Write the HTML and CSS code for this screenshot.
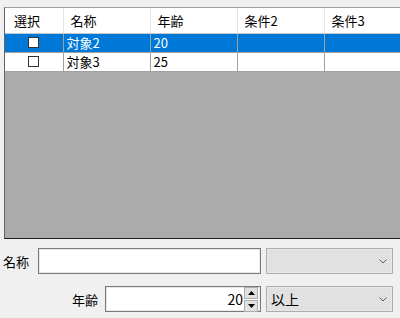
FILE: index.html
```html
<!DOCTYPE html>
<html lang="ja">
<head>
    <meta charset="UTF-8">
    <title>対象一覧</title>
    <link rel="stylesheet" href="styles.css">
</head>
<body>
    <!-- Grid -->
    <div class="grid-box">
        <table class="grid">
            <thead>
                <tr>
                    <th class="col-check">選択</th>
                    <th class="col-wide">名称</th>
                    <th class="col-wide">年齢</th>
                    <th class="col-wide">条件2</th>
                    <th class="col-wide">条件3</th>
                </tr>
            </thead>
            <tbody>
                <tr class="selected">
                    <td class="check-cell"><span class="checkbox"></span></td>
                    <td>対象2</td>
                    <td>20</td>
                    <td></td>
                    <td></td>
                </tr>
                <tr>
                    <td class="check-cell"><span class="checkbox"></span></td>
                    <td>対象3</td>
                    <td>25</td>
                    <td></td>
                    <td></td>
                </tr>
            </tbody>
        </table>
    </div>

    <!-- Filter form -->
    <div class="form">
        <div class="form-row">
            <label class="label label-name">名称</label>
            <div class="textbox name-box"></div>
            <div class="combo">
                <span class="combo-text"></span>
                <svg class="chevron" width="8" height="5" viewBox="0 0 8 5"><path d="M0.5 0.5 L4 4 L7.5 0.5" fill="none" stroke="#606060" stroke-width="1"/></svg>
            </div>
        </div>
        <div class="form-row">
            <label class="label label-age">年齢</label>
            <div class="textbox number-box">
                <span class="number-value">20</span>
                <div class="spinner">
                    <span class="spin-btn">
                        <svg width="7" height="4" viewBox="0 0 7 4"><path d="M3.5 0 L7 4 L0 4 Z" fill="#000"/></svg>
                    </span>
                    <span class="spin-btn">
                        <svg width="7" height="4" viewBox="0 0 7 4"><path d="M0 0 L7 0 L3.5 4 Z" fill="#000"/></svg>
                    </span>
                </div>
            </div>
            <div class="combo">
                <span class="combo-text">以上</span>
                <svg class="chevron" width="8" height="5" viewBox="0 0 8 5"><path d="M0.5 0.5 L4 4 L7.5 0.5" fill="none" stroke="#606060" stroke-width="1"/></svg>
            </div>
        </div>
    </div>
</body>
</html>
```

FILE: styles.css
```css
/* Base */
html, body {
    margin: 0;
    padding: 0;
    background-color: #f0f0f0;
    font-family: "Noto Sans CJK JP", "Noto Sans", sans-serif;
    font-size: 13px;
    color: #000;
    overflow: hidden;
}

body {
    width: 400px;
    height: 318px;
}

/* Grid */
.grid-box {
    margin: 7px 0 0 4px;
    width: 395px;
    height: 230px;
    overflow: hidden;
    background-color: #ababab;
    border-left: 1px solid #646464;
    border-top: 1px solid #a0a0a0;
    border-bottom: 1px solid #1e1e1e;
}

.grid {
    width: 406px;
    border-collapse: collapse;
    table-layout: fixed;
}

.grid th {
    height: 25px;
    padding: 0 0 0 7px;
    background-color: #fff;
    font-weight: normal;
    text-align: left;
    border-right: 1px solid #e5e5e5;
    border-bottom: 1px solid #c8c8c8;
    box-sizing: border-box;
}

.grid .col-check {
    width: 58px;
    padding-left: 9px;
}

.grid .col-wide {
    width: 87px;
}

.grid td {
    height: 18px;
    padding: 0 0 0 3px;
    line-height: 16px;
    background-color: #fff;
    border-right: 1px solid #a0a0a0;
    border-bottom: 1px solid #a0a0a0;
    white-space: nowrap;
}

.grid tr.selected td {
    background-color: #0078d7;
    color: #fff;
}

.grid .check-cell {
    padding: 0;
    text-align: center;
}

.checkbox {
    display: inline-block;
    width: 9px;
    height: 9px;
    border: 1px solid #333;
    background-color: #fff;
    vertical-align: middle;
    margin-top: -2px;
}

/* Form */
.form {
    margin-top: 9px;
    display: flex;
    flex-direction: column;
    gap: 12px;
}

.form-row {
    display: flex;
    align-items: center;
    height: 26px;
}

.label {
    font-size: 13px;
}

.label-name {
    margin-left: 3px;
    width: 35px;
}

.label-age {
    margin-left: 72px;
    width: 33px;
}

.textbox {
    height: 26px;
    box-sizing: border-box;
    background-color: #fff;
    border: 1px solid #7a7a7a;
    box-shadow: inset 0 0 0 1px #e8e8e8;
}

.name-box {
    width: 223px;
}

.number-box {
    width: 156px;
    display: flex;
    align-items: center;
    justify-content: flex-end;
    padding-right: 2px;
}

.number-value {
    font-size: 14px;
    margin-right: 1px;
}

.spinner {
    display: flex;
    flex-direction: column;
    gap: 1px;
}

.spin-btn {
    width: 12px;
    height: 10px;
    background-color: #e1e1e1;
    border: 1px solid #adadad;
    display: flex;
    align-items: center;
    justify-content: center;
}

.combo {
    margin-left: 5px;
    width: 127px;
    height: 26px;
    box-sizing: border-box;
    background-color: #e1e1e1;
    border: 1px solid #adadad;
    box-shadow: inset 0 0 0 1px #e8e8e8;
    display: flex;
    align-items: center;
    justify-content: space-between;
    padding: 0 5px 0 4px;
}

.combo-text {
    font-size: 14px;
}

.chevron {
    display: block;
    margin-top: 1px;
}
```
